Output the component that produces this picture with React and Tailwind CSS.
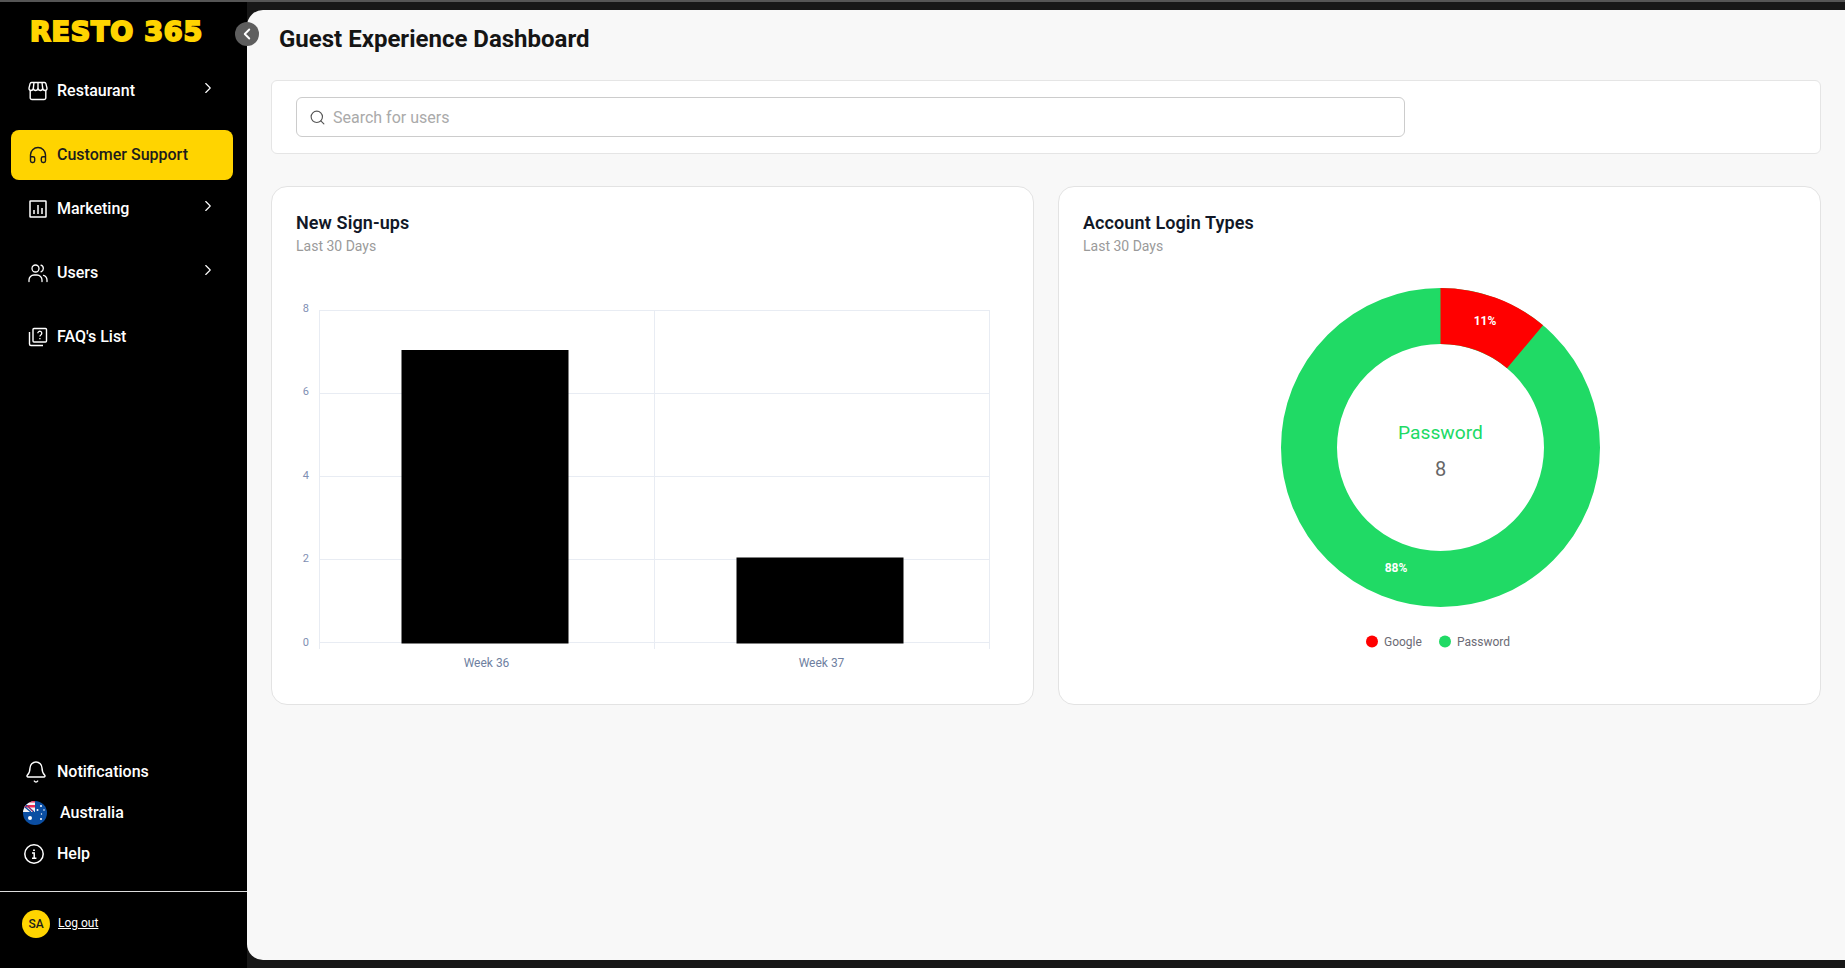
import React from 'react';
import { ChevronLeft, ChevronRight, Headphones, Bell, Search } from 'lucide-react';

const StoreIcon = () => (
  <svg width="20" height="20" viewBox="0 0 20 20" fill="none" stroke="currentColor" strokeWidth="1.4" strokeLinejoin="round">
    <path d="M3.5 1.5h13a1.5 1.5 0 0 1 1.4 1.1L19 7.2a2 2 0 0 1-1.9 2.3 2.4 2.4 0 0 1-2.4-2.1 2.4 2.4 0 0 1-2.4 2.1A2.4 2.4 0 0 1 10 7.4a2.4 2.4 0 0 1-2.3 2.1 2.4 2.4 0 0 1-2.4-2.1 2.4 2.4 0 0 1-2.4 2.1A2 2 0 0 1 1 7.2l1.1-4.6a1.5 1.5 0 0 1 1.4-1.1z" />
    <path d="M6 1.5 5.3 7.4M10 1.5v5.9M14 1.5l.7 5.9" />
    <path d="M2.2 9.5v7.2a1.8 1.8 0 0 0 1.8 1.8h12a1.8 1.8 0 0 0 1.8-1.8V9.5" />
  </svg>
);

const ChartIcon = () => (
  <svg width="20" height="20" viewBox="0 0 20 20" fill="none" stroke="currentColor" strokeWidth="1.5">
    <rect x="2" y="2" width="16" height="16" rx="0.5" />
    <path d="M6 15v-4M10 15V6M14 15V9" />
  </svg>
);

const UsersIcon = () => (
  <svg width="20" height="20" viewBox="0 0 20 20" fill="none" stroke="currentColor" strokeWidth="1.3" strokeLinecap="round">
    <circle cx="7.5" cy="5.5" r="3.5" />
    <path d="M1 18.5v-1.5a5 5 0 0 1 5-5h3a5 5 0 0 1 5 5v1.5" />
    <path d="M13 2.2a3.5 3.5 0 0 1 0 6.6M15.5 12.3a5 5 0 0 1 3.5 4.7v1.5" />
  </svg>
);

const FaqIcon = () => (
  <svg width="20" height="20" viewBox="0 0 20 20" fill="none" stroke="currentColor" strokeWidth="1.4">
    <rect x="5" y="1.5" width="13.5" height="13.5" rx="1" />
    <path d="M1.5 5v12a1.5 1.5 0 0 0 1.5 1.5h12" />
    <path d="M9.8 6.2a2 2 0 1 1 3 1.8c-.6.4-.9.7-.9 1.6" strokeWidth="1.3" />
    <path d="M11.9 11v1.2" strokeWidth="1.3" />
  </svg>
);

const InfoIcon = () => (
  <svg width="20" height="20" viewBox="0 0 20 20" fill="none" stroke="currentColor" strokeWidth="1.5">
    <circle cx="10" cy="10" r="9.2" />
    <path d="M10 5.4v1.6" strokeWidth="1.8" />
    <path d="M8 9h2.2v5M8 14.2h4.4" strokeWidth="1.5" />
  </svg>
);

const FlagIcon = () => (
  <svg width="24" height="24" viewBox="0 0 24 24">
    <defs>
      <clipPath id="flag-clip"><circle cx="12" cy="12" r="12" /></clipPath>
    </defs>
    <g clipPath="url(#flag-clip)">
      <rect width="24" height="24" fill="#0b4ea2" />
      <rect width="12" height="11" fill="#f5f5f5" />
      <path d="M0 4h12v2.4H0zM0 0h12v1.5H0z" fill="#ee2a53" />
      <path d="M3 4 11 11M2 6l6 5" stroke="#0b4ea2" strokeWidth="1.4" />
      <path d="M4 5l6 5.5" stroke="#ee2a53" strokeWidth="1" />
      <circle cx="7" cy="17" r="2" fill="#fff" />
      <circle cx="18" cy="5" r="1" fill="#fff" />
      <circle cx="14.5" cy="9" r="1" fill="#fff" />
      <circle cx="21" cy="9" r="0.8" fill="#fff" />
      <circle cx="18.5" cy="13" r="0.7" fill="#fff" />
      <circle cx="18" cy="18" r="1" fill="#fff" />
    </g>
  </svg>
);

function NavItem({ icon, label, chevron, active, className }) {
  return (
    <div
      className={
        'relative flex h-[50px] items-center rounded-lg pl-[17px] text-base font-medium ' +
        (active ? 'bg-[#ffd400] text-[#1c1c1c] ' : 'text-white ') +
        className
      }
    >
      <span className="flex w-[20px] justify-center">{icon}</span>
      <span className="ml-[9px]">{label}</span>
      {chevron && (
        <span className="absolute right-[16px] top-[13px]">
          <ChevronRight size={18} strokeWidth={1.5} />
        </span>
      )}
    </div>
  );
}

function Sidebar() {
  return (
    <aside className="relative z-10 flex w-[247px] shrink-0 flex-col bg-black">
      <div className="mt-[17px] h-[28px] pl-[30px] font-['DejaVu_Sans',sans-serif] text-[27px] font-bold leading-[26px] tracking-[0.8px] whitespace-nowrap text-[#ffd400] [-webkit-text-stroke:2px_#ffd400]">
        RESTO 365
      </div>
      <button className="absolute left-[235px] top-[20px] flex h-[24px] w-[24px] items-center justify-center rounded-full bg-[#5e5e5e] text-white">
        <ChevronLeft size={18} strokeWidth={2.5} />
      </button>

      <nav className="ml-[11px] mr-[14px] mt-[19px] flex flex-col">
        <NavItem icon={<StoreIcon />} label="Restaurant" chevron />
        <NavItem icon={<Headphones size={20} strokeWidth={1.7} />} label="Customer Support" active className="mt-[14px]" />
        <NavItem icon={<ChartIcon />} label="Marketing" chevron className="mt-[4px]" />
        <NavItem icon={<UsersIcon />} label="Users" chevron className="mt-[14px]" />
        <NavItem icon={<FaqIcon />} label="FAQ's List" className="mt-[14px]" />
      </nav>

      <div className="mt-auto flex flex-col text-base font-medium text-white">
        <div className="flex h-[41px] items-center pl-[24px]">
          <Bell size={24} strokeWidth={1.4} />
          <span className="ml-[9px]">Notifications</span>
        </div>
        <div className="flex h-[41px] items-center pl-[23px]">
          <FlagIcon />
          <span className="ml-[13px]">Australia</span>
        </div>
        <div className="flex h-[41px] items-center pl-[24px]">
          <InfoIcon />
          <span className="ml-[13px]">Help</span>
        </div>
      </div>
      <div className="mt-[17px] flex h-[77px] items-start border-t border-[#dddddd] pl-[22px] pt-[18px]">
        <div className="flex h-[28px] w-[28px] items-center justify-center rounded-full bg-[#ffd400] text-xs font-medium text-[#1c1c1c]">
          SA
        </div>
        <a className="ml-[8px] mt-[3px] text-xs leading-[20px] text-white underline">Log out</a>
      </div>
    </aside>
  );
}

function BarChart() {
  const gridY = [310.5, 393.5, 476.5, 559.5, 642.5];
  const labels = ['8', '6', '4', '2', '0'];
  const labelY = [312, 395, 479, 562, 646];
  return (
    <svg className="absolute left-[-1px] top-[-1px]" width="762" height="518" viewBox="271 186 762 518">
      {gridY.map((y) => (
        <line key={y} x1="319" x2="989" y1={y} y2={y} stroke="#e8ecf3" strokeWidth="1" />
      ))}
      {[319.5, 654.5, 989.5].map((x) => (
        <line key={x} x1={x} x2={x} y1="310" y2="649" stroke="#e8ecf3" strokeWidth="1" />
      ))}
      <rect x="401.5" y="350" width="167" height="293.5" fill="#000" />
      <rect x="736.5" y="557.5" width="167" height="86" fill="#000" />
      {labels.map((t, i) => (
        <text key={t} x="309" y={labelY[i]} textAnchor="end" fontSize="11" fill="#7f8fb3">{t}</text>
      ))}
      <text x="486.5" y="667" textAnchor="middle" fontSize="12" fill="#6f7f9f">Week 36</text>
      <text x="821.5" y="667" textAnchor="middle" fontSize="12" fill="#6f7f9f">Week 37</text>
    </svg>
  );
}

function DonutChart() {
  const a = (40 * Math.PI) / 180;
  const cx = 1440.5;
  const cy = 447.5;
  const R = 159.5;
  const r = 103.5;
  const ox = cx + R * Math.sin(a);
  const oy = cy - R * Math.cos(a);
  const ix = cx + r * Math.sin(a);
  const iy = cy - r * Math.cos(a);
  return (
    <svg className="absolute left-[-1px] top-[-1px]" width="763" height="518" viewBox="1058 186 763 518">
      <circle cx={cx} cy={cy} r={(R + r) / 2} fill="none" stroke="#20da65" strokeWidth={R - r} />
      <path
        d={`M${cx} ${cy - R}A${R} ${R} 0 0 1 ${ox} ${oy}L${ix} ${iy}A${r} ${r} 0 0 0 ${cx} ${cy - r}Z`}
        fill="#ff0000"
      />
      <text x="1485" y="325" textAnchor="middle" fontSize="12" fontWeight="700" fill="#fff">11%</text>
      <text x="1396" y="572" textAnchor="middle" fontSize="12" fontWeight="700" fill="#fff">88%</text>
      <text x={cx} y="439" textAnchor="middle" fontSize="19.2" fill="#20da65">Password</text>
      <text x={cx} y="476" textAnchor="middle" fontSize="20" fill="#666666">8</text>
      <circle cx="1372" cy="641.5" r="6" fill="#ff0000" />
      <text x="1384" y="646" fontSize="12" fill="#6b6b75">Google</text>
      <circle cx="1445" cy="641.5" r="6" fill="#20da65" />
      <text x="1457" y="646" fontSize="12" fill="#6b6b75">Password</text>
    </svg>
  );
}

function ChartCard({ title, children }) {
  return (
    <div className="relative h-[519px] rounded-2xl border border-[#e3e3e3] bg-white px-[24px] pt-[23px]">
      {children}
      <h3 className="relative text-lg font-semibold leading-[26px] tracking-[0.1px] text-[#111827]">{title}</h3>
      <p className="relative text-sm leading-[20px] text-[#9a9a9a]">Last 30 Days</p>
    </div>
  );
}

export default function App() {
  return (
    <div className="flex h-screen flex-col overflow-hidden bg-[#171717] font-['Roboto',sans-serif]">
      <div className="h-[2px] shrink-0 bg-[#555555]" />
      <div className="flex min-h-0 flex-1">
        <Sidebar />
        <div className="flex min-w-0 flex-1 flex-col py-[8px]">
          <main className="flex-1 rounded-l-2xl bg-[#f8f8f8] pl-[24px] pr-[24px]">
            <h1 className="mt-[14px] pl-[8px] text-2xl font-bold leading-[30px] text-[#151515]">
              Guest Experience Dashboard
            </h1>
            <div className="mt-[26px] flex h-[74px] items-center rounded-md border border-[#e5e5e5] bg-white pl-[24px]">
              <div className="flex h-[40px] w-[1109px] items-center rounded-md border border-[#cccccc] bg-white pl-[12px]">
                <Search size={17} strokeWidth={1.6} className="text-[#555555]" />
                <input
                  placeholder="Search for users"
                  className="ml-[7px] flex-1 bg-transparent pt-[2px] text-base text-[#333333] outline-none placeholder:text-[#aaaaaa]"
                />
              </div>
            </div>
            <div className="mt-[32px] grid grid-cols-[763px_763px] gap-[24px]">
              <ChartCard title="New Sign-ups">
                <BarChart />
              </ChartCard>
              <ChartCard title="Account Login Types">
                <DonutChart />
              </ChartCard>
            </div>
          </main>
        </div>
      </div>
    </div>
  );
}
